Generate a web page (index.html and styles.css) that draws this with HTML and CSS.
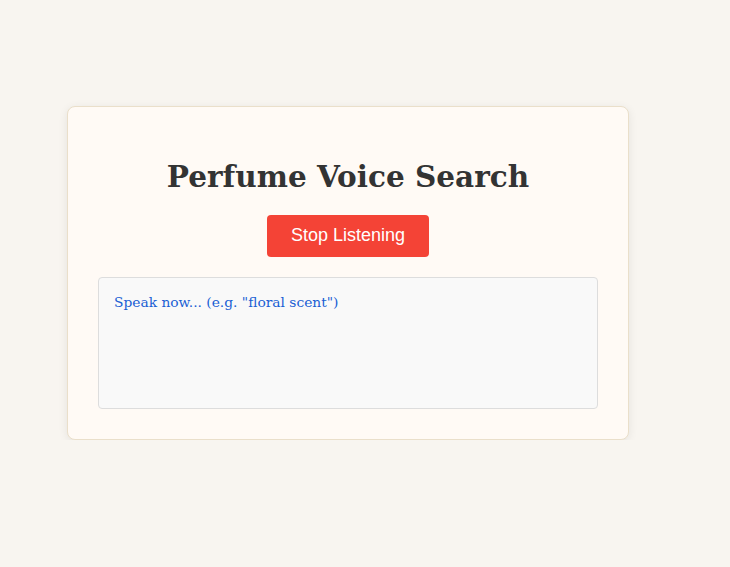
FILE: index.html
```html
<!DOCTYPE html>
<html lang="en">
<head>
<meta charset="utf-8">
<title>Perfume Voice Search</title>
<link rel="stylesheet" href="styles.css">
</head>
<body>
<div class="card">
  <h1 class="title">Perfume Voice Search</h1>
  <button class="listen-btn">Stop Listening</button>
  <div class="transcript">Speak now... (e.g. "floral scent")</div>
</div>
</body>
</html>
```
FILE: styles.css
```css
html, body {
  background: #f8f5f0;
}
body {
  margin: 0;
  padding: 106px 0 0 67px;
  font-family: "DejaVu Serif", Georgia, serif;
}
.card {
  width: 500px;
  padding: 30px;
  background: #fffaf5;
  border: 1px solid #eadfca;
  border-radius: 8px;
  box-shadow: 0 2px 10px rgba(0, 0, 0, 0.08);
  text-align: center;
}
.title {
  font-family: "DejaVu Serif", Georgia, serif;
  font-size: 29.5px;
  font-weight: bold;
  color: #333;
  margin: 21px 0 20px;
  line-height: 37px;
}
.listen-btn {
  display: inline-block;
  vertical-align: top;
  font-family: "Liberation Sans", Arial, sans-serif;
  font-size: 18px;
  line-height: 21px;
  color: #fff;
  background: #f44336;
  border: none;
  border-radius: 4px;
  padding: 10px 24px 11px;
  margin: 0;
}
.transcript {
  margin-top: 20px;
  min-height: 100px;
  padding: 15px;
  border: 1px solid #ddd;
  border-radius: 4px;
  background: #f9f9f9;
  text-align: left;
  font-family: "DejaVu Serif", Georgia, serif;
  font-size: 13.8px;
  line-height: 18px;
  color: #1a5fd4;
}
```
